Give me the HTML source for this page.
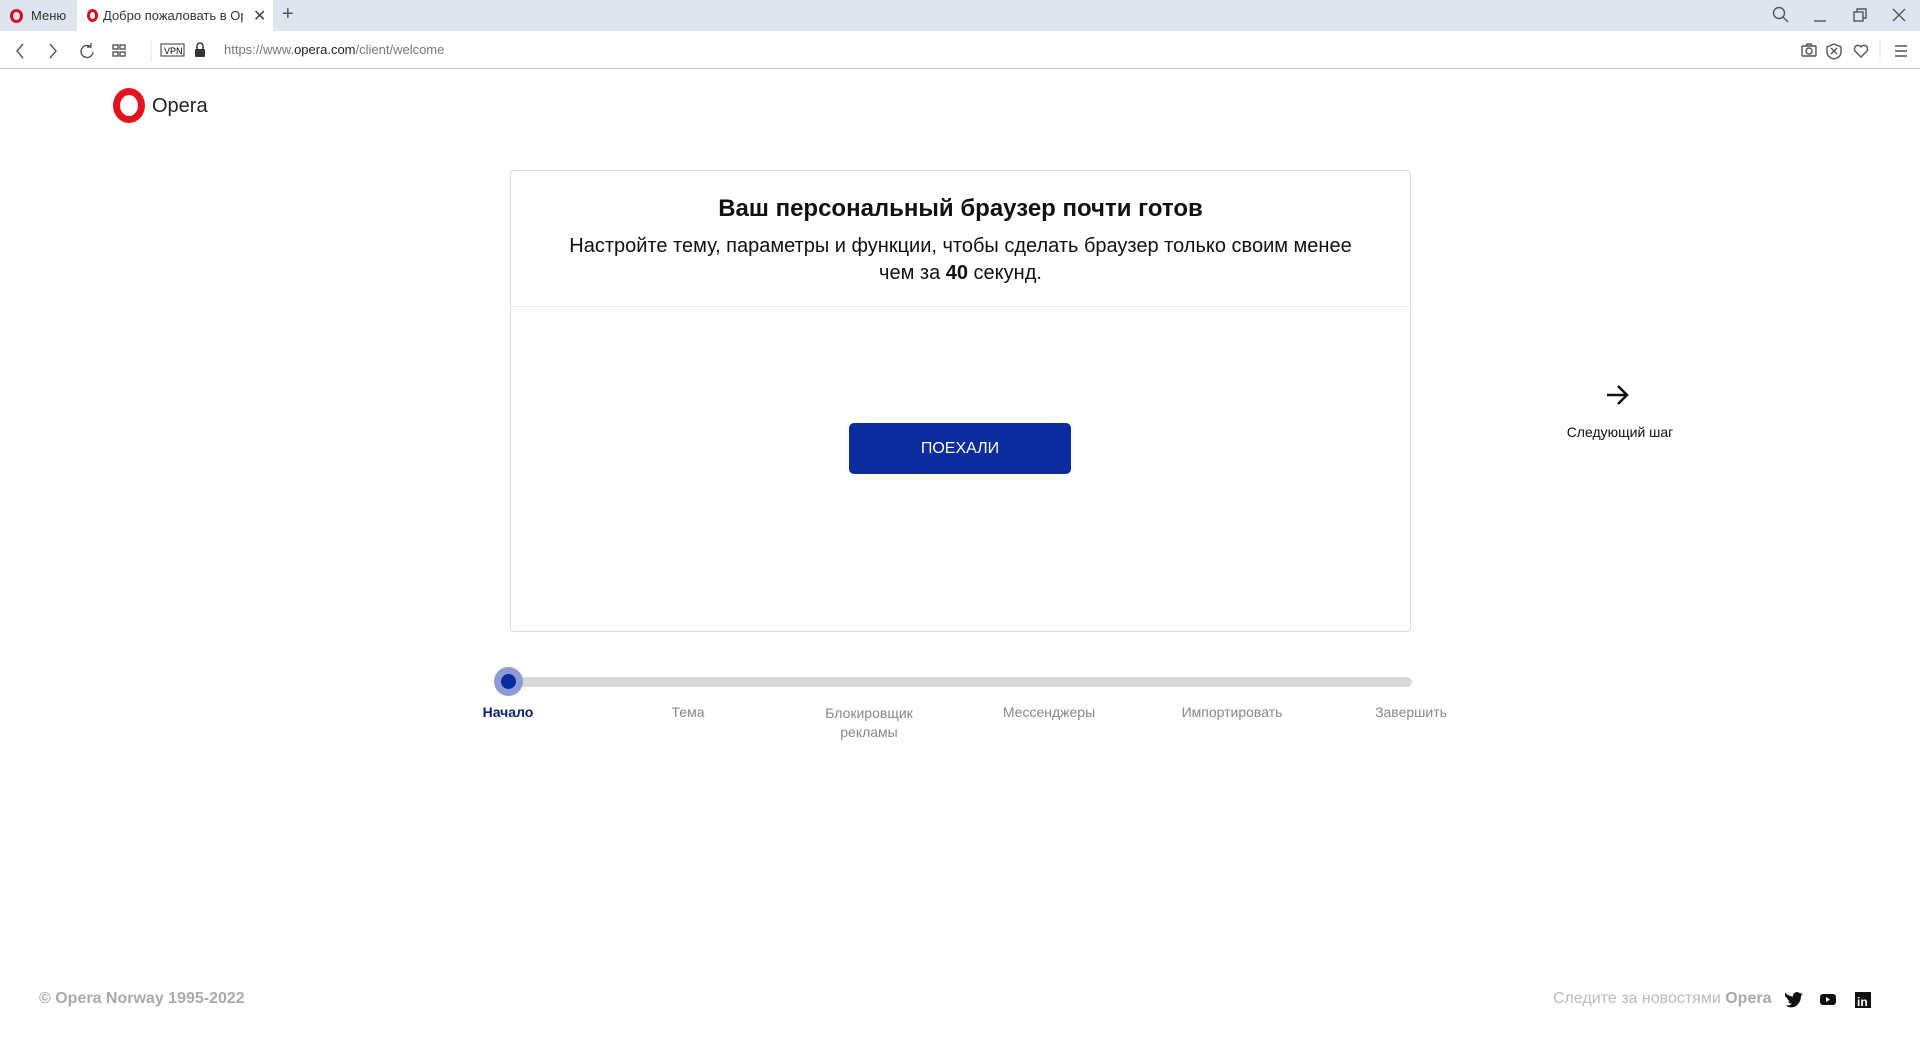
<!DOCTYPE html>
<html><head><meta charset="utf-8"><style>
*{margin:0;padding:0;box-sizing:border-box}
body{width:1920px;height:1040px;background:#fff;font-family:"Liberation Sans",sans-serif;position:relative;overflow:hidden;color:#111}
.abs{position:absolute}
#tabs{left:0;top:0;width:1920px;height:31px;background:#dfe5ee}
#addr{left:0;top:31px;width:1920px;height:38px;background:#fff;border-bottom:1px solid #c8c8c8}
.tab{top:0;height:31px;font-size:13px;color:#333;display:flex;align-items:center;white-space:nowrap;overflow:hidden}
.ico{stroke:#555;fill:none;stroke-width:1.4}
</style></head><body>
<div id="tabs" class="abs"></div>
<div class="abs tab" style="left:0;width:77px;padding-left:10px"><span style="display:inline-block;width:13px;height:14px;border:3px solid #d3101c;border-radius:50%;margin-right:8px;flex:none"></span>Меню</div>
<div class="abs tab" style="left:77px;width:196px;background:#fff;padding-left:10px"><span style="display:inline-block;width:11px;height:13px;border:3px solid #d3101c;border-radius:50%;margin-right:5px;flex:none"></span><span style="width:140px;overflow:hidden;display:inline-block">Добро пожаловать в Opera</span><span style="margin-left:10px;font-size:16px;color:#444">✕</span></div>
<div class="abs" style="left:282px;top:3px;font-size:20px;color:#555">+</div>
<svg class="abs" style="left:1770px;top:5px" width="150" height="22"><g class="ico"><circle cx="9" cy="8" r="5.5"/><path d="M13 12l5 5"/><path d="M44 16h12"/><rect x="84" y="7" width="9" height="9"/><path d="M87 7v-3h9v9h-3"/><path d="M123 4l12 12M135 4l-12 12"/></g></svg>
<div id="addr" class="abs"></div>
<svg class="abs" style="left:10px;top:40px" width="470" height="22"><g class="ico" stroke="#bbb"><path d="M13 4l-6 7 6 7"/><path d="M40 4l6 7-6 7"/></g><g class="ico"><path d="M81 7a6 6 0 1 0 2 5M81 3v4h-4"/><rect x="103" y="5" width="5" height="4"/><rect x="110" y="5" width="5" height="4"/><rect x="103" y="12" width="5" height="4"/><rect x="110" y="12" width="5" height="4"/></g><line x1="141" y1="0" x2="141" y2="22" stroke="#e5e5e5"/><rect x="151" y="4" width="23" height="12" fill="none" stroke="#333"/><text x="154" y="14" font-size="9" font-family="Liberation Sans">VPN</text><rect x="185" y="9" width="10" height="8" rx="1" fill="#333"/><path d="M187 9v-3a3 3 0 0 1 6 0v3" fill="none" stroke="#333" stroke-width="1.5"/></svg>
<div class="abs" style="left:224px;top:42px;font-size:13px;color:#777">https://www.<span style="color:#222">opera.com</span>/client/welcome</div>
<svg class="abs" style="left:1795px;top:40px" width="115" height="22"><g class="ico" stroke="#444"><rect x="7" y="6" width="14" height="10" rx="1"/><circle cx="14" cy="11" r="3"/><path d="M11 6l1-2h4l1 2"/><path d="M39 4l7 3v5c0 4-3 6-7 7-4-1-7-3-7-7v-5z"/><path d="M36 8l6 6M42 8l-6 6"/><path d="M66 17l-6-6a3.5 3.5 0 0 1 6-4 3.5 3.5 0 0 1 6 4z"/><path d="M100 6h12M100 11h12M100 16h12"/></g><line x1="85" y1="0" x2="85" y2="22" stroke="#e5e5e5"/></svg>
<!-- logo -->
<div class="abs" style="left:113px;top:88px;width:32px;height:35px;border:7px solid #e3141f;border-radius:50%"></div>
<div class="abs" style="left:152px;top:95px;font-size:20px;color:#222">Opera</div>
<!-- card -->
<div class="abs" style="left:510px;top:170px;width:901px;height:462px;border:1px solid #dcdcdc;border-radius:4px"></div>
<div class="abs" style="left:511px;top:306px;width:899px;height:1px;background:#ececec"></div>
<div class="abs" style="left:510px;top:195px;width:901px;text-align:center;font-size:24px;font-weight:bold">Ваш персональный браузер почти готов</div>
<div class="abs" style="left:510px;top:233px;width:901px;text-align:center;font-size:20px;line-height:27px">Настройте тему, параметры и функции, чтобы сделать браузер только своим менее<br>чем за <b>40</b> секунд.</div>
<div class="abs" style="left:849px;top:423px;width:222px;height:51px;background:#0a2c9e;border-radius:5px;color:#fff;font-size:16px;text-align:center;line-height:51px">ПОЕХАЛИ</div>
<svg class="abs" style="left:1604px;top:382px" width="28" height="26"><path d="M3 13h20M14 4l9 9-9 9" stroke="#111" stroke-width="2.5" fill="none"/></svg>
<div class="abs" style="left:1540px;top:424px;width:160px;text-align:center;font-size:14px">Следующий шаг</div>
<!-- progress -->
<div class="abs" style="left:508px;top:677px;width:904px;height:10px;background:#d8d8d8;border-radius:5px"></div>
<div class="abs" style="left:494px;top:667px;width:29px;height:29px;border-radius:50%;background:#8c9bd6"></div>
<div class="abs" style="left:501px;top:674px;width:15px;height:15px;border-radius:50%;background:#0a2c9e"></div>
<div class="abs" style="top:704px;left:0;width:1920px;font-size:14px;color:#888">
<div class="abs" style="left:448px;width:120px;text-align:center;color:#0a2270;font-weight:bold">Начало</div>
<div class="abs" style="left:628px;width:120px;text-align:center">Тема</div>
<div class="abs" style="left:799px;width:140px;text-align:center;line-height:19px">Блокировщик<br>рекламы</div>
<div class="abs" style="left:979px;width:140px;text-align:center">Мессенджеры</div>
<div class="abs" style="left:1162px;width:140px;text-align:center">Импортировать</div>
<div class="abs" style="left:1341px;width:140px;text-align:center">Завершить</div>
</div>
<!-- footer -->
<div class="abs" style="left:39px;top:990px;font-size:16px;color:#aaa;font-weight:bold">© Opera Norway 1995-2022</div>
<div class="abs" style="left:1553px;top:990px;font-size:16px;color:#bbb">Следите за новостями <b style="color:#aaa">Opera</b></div>
<svg class="abs" style="left:1785px;top:990px" width="90" height="20"><path d="M2 14c4 1 8 0 10-3 2-2 3-5 3-8l2-2-2 .5 1-2-2 1a4 4 0 0 0-7 3c-3 0-6-2-8-4-1 2 0 4 1 5H1c0 2 2 3 3 4H2c1 2 2 2 4 2-2 2-4 2-6 2z" fill="#111" transform="translate(1 3)"/><rect x="35" y="4" width="16" height="11" rx="3" fill="#111"/><path d="M41 7l4 2.5-4 2.5z" fill="#fff"/><rect x="70" y="2" width="16" height="16" fill="#111"/><text x="72" y="16" font-size="12" font-weight="bold" fill="#fff" font-family="Liberation Sans">in</text></svg>
</body></html>
